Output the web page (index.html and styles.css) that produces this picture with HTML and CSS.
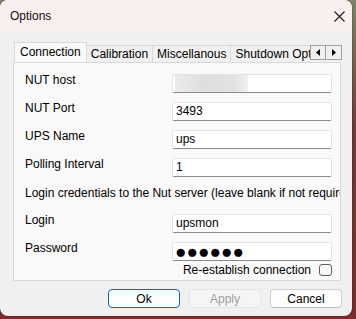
FILE: index.html
```html
<!DOCTYPE html>
<html lang="en">
<head>
  <meta charset="UTF-8" />
  <title>Options</title>
  <link rel="stylesheet" href="styles.css">
</head>
<body>
  <div class="window">
    <div class="titlebar">
      <span class="title">Options</span>
      <svg class="close" width="11" height="11" viewBox="0 0 11 11">
        <path d="M0.5 0.5 L10.5 10.5 M10.5 0.5 L0.5 10.5" stroke="#1a1a1a" stroke-width="1.1" />
      </svg>
    </div>
    <div class="content">
      <div class="tabs">
        <div class="tab-strip">
          <div class="tab active">Connection</div>
          <div class="tab">Calibration</div>
          <div class="tab">Miscellanous</div>
          <div class="tab">Shutdown Options</div>
        </div>
        <div class="tab-scroll">
          <span class="arrow"><svg width="5" height="7" viewBox="0 0 5 7"><path d="M4 0 L0 3.5 L4 7 Z" fill="#000" /></svg></span>
          <span class="arrow"><svg width="5" height="7" viewBox="0 0 5 7"><path d="M1 0 L5 3.5 L1 7 Z" fill="#000" /></svg></span>
        </div>
      </div>
      <div class="panel">
        <div class="row">
          <label>NUT host</label>
          <div class="field"><span class="blur"></span></div>
        </div>
        <div class="row">
          <label>NUT Port</label>
          <div class="field">3493</div>
        </div>
        <div class="row">
          <label>UPS Name</label>
          <div class="field">ups</div>
        </div>
        <div class="row">
          <label>Polling Interval</label>
          <div class="field">1</div>
        </div>
        <div class="note">Login credentials to the Nut server (leave blank if not required)</div>
        <div class="row">
          <label>Login</label>
          <div class="field">upsmon</div>
        </div>
        <div class="row">
          <label>Password</label>
          <div class="field dots">●●●●●●</div>
        </div>
        <div class="check-row">
          <span>Re-establish connection</span>
          <span class="checkbox"></span>
        </div>
      </div>
      <div class="buttons">
        <button class="btn default">Ok</button>
        <button class="btn" disabled>Apply</button>
        <button class="btn">Cancel</button>
      </div>
    </div>
  </div>
</body>
</html>
```

FILE: styles.css
```css
* {
  box-sizing: border-box;
  font-family: 'Liberation Sans', Arial, sans-serif;
}
body {
  margin: 0;
  width: 356px;
  height: 319px;
  overflow: hidden;
  background: linear-gradient(#7d8466 0, #6f3a36 40%, #7a2c2c 100%);
}
.window {
  width: 352px;
  height: 316px;
  background: #f0f0f0;
  border-radius: 8px;
  overflow: hidden;
  display: flex;
  flex-direction: column;
  box-shadow: 0 0 0 1px rgba(0, 0, 0, 0.15);
}
.titlebar {
  height: 31px;
  background: #f9efef;
  display: flex;
  align-items: center;
  justify-content: space-between;
  padding: 0 7px 0 10px;
}
.title {
  font-size: 12px;
  color: #111;
}
.close {
  margin-top: 1px;
}
.content {
  flex: 1;
  padding: 11px 0 0 13px;
  display: flex;
  flex-direction: column;
}
.tabs {
  display: flex;
  align-items: flex-end;
  height: 20px;
  position: relative;
  z-index: 1;
}
.tab-strip {
  display: flex;
  align-items: flex-end;
  width: 297px;
  padding-left: 1px;
  overflow: hidden;
}
.tab {
  height: 17px;
  padding: 0 4px;
  font-size: 12px;
  line-height: 16px;
  color: #000;
  background: #f0f0f0;
  border: 1px solid #d9d9d9;
  border-bottom: none;
  margin-left: -1px;
  white-space: nowrap;
}
.tab.active {
  height: 21px;
  margin-bottom: -1px;
  padding: 0 5px;
  line-height: 19px;
  background: #f9f9f9;
  margin-left: 0;
  position: relative;
  z-index: 2;
}
.tab-scroll {
  display: flex;
  margin-bottom: 2px;
}
.arrow {
  width: 16px;
  height: 15px;
  background: #f0f0f0;
  border: 1px solid #a0a0a0;
  display: flex;
  align-items: center;
  justify-content: center;
}
.arrow + .arrow {
  border-left: none;
}
.panel {
  width: 328px;
  height: 219px;
  background: #f9f9f9;
  border: 1px solid #d9d9d9;
  padding: 10px 7px 0 11px;
  overflow: hidden;
  font-size: 12px;
  color: #000;
}
.row {
  display: flex;
  align-items: flex-start;
  height: 19px;
  margin-bottom: 9px;
}
.row:first-child {
  margin-top: 1px;
}
.row label {
  width: 147px;
  line-height: 15px;
  margin-top: -1px;
}
.field {
  width: 160px;
  height: 19px;
  background: #fff;
  border: 1px solid #e3e3e3;
  border-bottom-color: #8a8a8a;
  border-radius: 2px;
  padding: 0 3px;
  line-height: 17px;
  white-space: nowrap;
  overflow: hidden;
}
.blur {
  display: block;
  width: 73px;
  height: 17px;
  margin-left: -1px;
  background: linear-gradient(90deg, #ebebeb, #dedede 40%, #e2e2e2 80%, #f0f0f0);
}
.dots {
  font-size: 19px;
  letter-spacing: 0;
  line-height: 17px;
  padding-left: 2px;
}
.note {
  line-height: 15px;
  white-space: nowrap;
  margin-bottom: 13px;
}
.check-row {
  display: flex;
  justify-content: flex-end;
  align-items: center;
  margin-top: -7px;
  padding-right: 1px;
  gap: 8px;
  height: 13px;
}
.checkbox {
  width: 13px;
  height: 12px;
  border: 1px solid #5f5f5f;
  border-radius: 3px;
  background: #f9f9f9;
}
.buttons {
  display: flex;
  justify-content: flex-end;
  gap: 9px;
  padding-right: 10px;
  margin-top: 8px;
}
.btn {
  width: 72px;
  height: 19px;
  font-size: 12px;
  padding: 0;
  background: #fdfdfd;
  border: 1px solid #d0d0d0;
  border-bottom-color: #bcbcbc;
  border-radius: 4px;
  color: #000;
}
.btn.default {
  border: 1px solid #0067c0;
}
.btn:disabled {
  background: #f5f5f5;
  border-color: #e5e5e5;
  color: #a0a0a0;
}
```
